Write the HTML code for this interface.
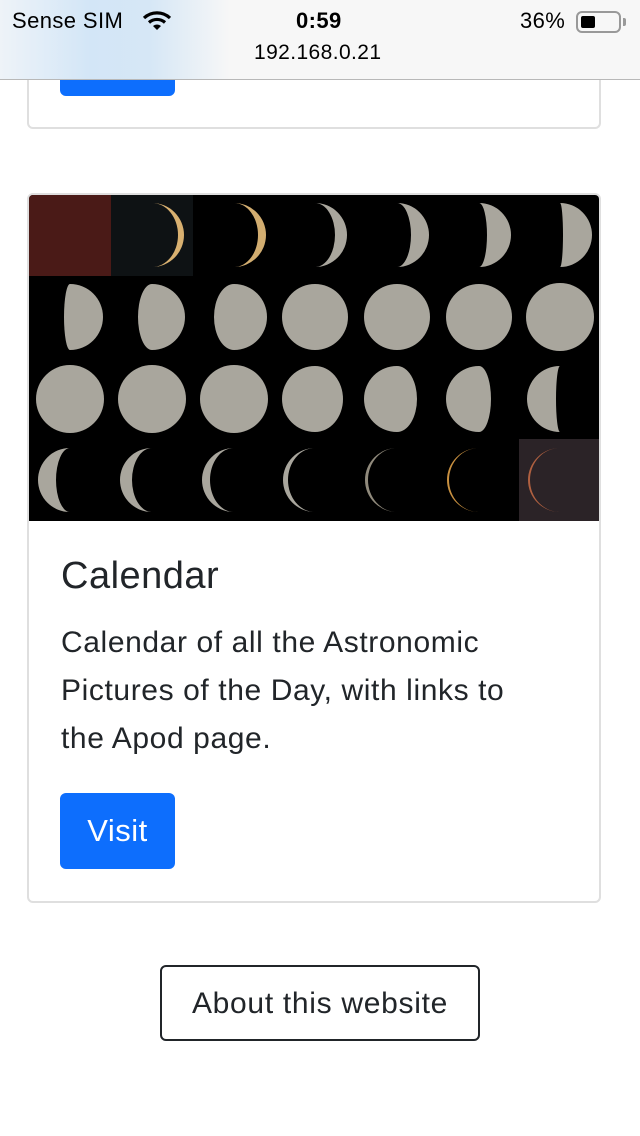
<!DOCTYPE html>
<html><head><meta charset="utf-8"><style>
*{margin:0;padding:0;box-sizing:border-box}
body{width:640px;height:1136px;background:#fff;font-family:"Liberation Sans",sans-serif;color:#212529;position:relative;overflow:hidden}
.sb{position:absolute;left:0;top:0;width:640px;height:80px;background:linear-gradient(90deg,#eef3f8 0,#d3e6f7 90px,#d6e7f6 150px,#f7f7f7 230px,#f7f7f7);border-bottom:1px solid #b8b8b8;z-index:2}
.sb span{position:absolute;font-size:22px;color:#000;letter-spacing:0.4px}
.card{position:absolute;left:27px;width:574px;border:2px solid #dfdfdf;border-radius:6px;background:#fff}
.btn{position:absolute;background:#0d6efd;color:#fff;border-radius:6px;font-size:31px;letter-spacing:0.5px;text-align:center;line-height:76px}
</style></head><body>
<div class="sb">
<span style="left:12px;top:8px">Sense SIM</span>
<svg style="position:absolute;left:142px;top:11px" width="30" height="20" viewBox="0 0 30 20"><path d="M2 7a19 19 0 0 1 26 0" stroke="#000" stroke-width="3.2" fill="none"/><path d="M7 11.5a12 12 0 0 1 16 0" stroke="#000" stroke-width="3.2" fill="none"/><path d="M15 19l-4-4a6 6 0 0 1 8 0z" fill="#000"/></svg>
<span style="left:296px;top:8px;font-weight:bold">0:59</span>
<span style="left:254px;top:41px;font-size:21px">192.168.0.21</span>
<span style="left:520px;top:8px">36%</span>
<div style="position:absolute;left:576px;top:11px;width:45px;height:22px;border:2px solid #999;border-radius:6px"><div style="position:absolute;left:3px;top:3px;width:14px;height:12px;background:#000;border-radius:2px"></div></div>
<div style="position:absolute;left:623px;top:18px;width:3px;height:8px;background:#999;border-radius:0 2px 2px 0"></div>
</div>
<div class="card" style="top:20px;height:109px;border-top:none"></div>
<div class="btn" style="left:60px;top:40px;width:115px;height:56px;z-index:1"></div>
<div class="card" style="top:193px;height:710px;overflow:hidden">
<svg width="572" height="326" viewBox="0 0 572 326" style="display:block">
<rect width="572" height="326" fill="#000"/>
<rect x="0" y="0" width="82" height="81" fill="#4a1a17"/>
<rect x="82" y="0" width="82" height="81" fill="#0e1214"/>
<rect x="490" y="244" width="82" height="82" fill="#2b2327"/>
<g fill="#a9a69d">
<path d="M123 8a32 32 0 0 1 0 64a26 32 0 0 0 0-64z" fill="#d8b070"/>
<path d="M205 8a32 32 0 0 1 0 64a24 32 0 0 0 0-64z" fill="#d2ad70"/>
<path d="M286 8a32 32 0 0 1 0 64a20 32 0 0 0 0-64z"/>
<path d="M368 8a32 32 0 0 1 0 64a14 32 0 0 0 0-64z"/>
<path d="M450 8a32 32 0 0 1 0 64a8 32 0 0 0 0-64z"/>
<path d="M531 8a32 32 0 0 1 0 64a3 32 0 0 0 0-64z"/>
<path d="M41 89a33 33 0 0 1 0 66a6 33 0 0 1 0-66z"/>
<path d="M123 89a33 33 0 0 1 0 66a14 33 0 0 1 0-66z"/>
<path d="M205 89a33 33 0 0 1 0 66a20 33 0 0 1 0-66z"/>
<circle cx="286" cy="122" r="33"/><circle cx="368" cy="122" r="33"/><circle cx="450" cy="122" r="33"/><circle cx="531" cy="122" r="34"/>
<circle cx="41" cy="204" r="34"/><circle cx="123" cy="204" r="34"/><circle cx="205" cy="204" r="34"/>
<path d="M286 171a33 33 0 0 0 0 66a28 33 0 0 0 0-66z"/>
<path d="M368 171a33 33 0 0 0 0 66a20 33 0 0 0 0-66z"/>
<path d="M450 171a33 33 0 0 0 0 66a12 33 0 0 0 0-66z"/>
<path d="M531 171a33 33 0 0 0 0 66a4 33 0 0 1 0-66z"/>
<path d="M41 253a32 32 0 0 0 0 64a14 32 0 0 1 0-64z"/>
<path d="M123 253a32 32 0 0 0 0 64a20 32 0 0 1 0-64z"/>
<path d="M205 253a32 32 0 0 0 0 64a24 32 0 0 1 0-64z"/>
<path d="M286 253a32 32 0 0 0 0 64a27 32 0 0 1 0-64z"/>
<path d="M368 253a32 32 0 0 0 0 64a29 32 0 0 1 0-64z" fill="#908a7c"/>
<path d="M450 253a32 32 0 0 0 0 64a30 32 0 0 1 0-64z" fill="#c89040"/>
<path d="M531 253a32 32 0 0 0 0 64a30 32 0 0 1 0-64z" fill="#b06040"/>
</g>
</svg>
<div style="position:absolute;left:32px;top:360px;font-size:38px;letter-spacing:0.5px;font-weight:500">Calendar</div>
<div style="position:absolute;left:32px;top:424px;width:475px;font-size:30px;letter-spacing:0.6px;line-height:48px">Calendar of all the Astronomic Pictures of the Day, with links to the Apod page.</div>
<div class="btn" style="left:31px;top:598px;width:115px;height:76px">Visit</div>
</div>
<div style="position:absolute;left:160px;top:965px;width:320px;height:76px;border:2px solid #212529;border-radius:6px;font-size:30px;letter-spacing:0.7px;text-align:center;line-height:74px">About this website</div>
</body></html>
